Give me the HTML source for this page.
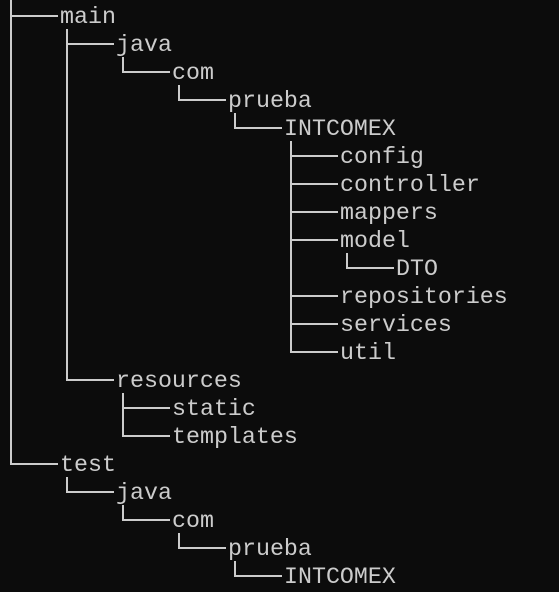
<!DOCTYPE html>
<html><head><style>
html,body{margin:0;padding:0;background:#0c0c0c;width:559px;height:592px;overflow:hidden;position:relative}
.t{position:absolute;font-family:"Liberation Mono",monospace;font-size:23.3px;line-height:28px;color:#cccccc;white-space:pre}
.v,.h{position:absolute;background:#cccccc}
.v{width:2px}.h{height:2px}
</style></head><body>
<div id="c"></div>
<script>
var rows=[[1,'main',0],[2,'java',0],[3,'com',1],[4,'prueba',1],[5,'INTCOMEX',1],[6,'config',0],[6,'controller',0],[6,'mappers',0],[6,'model',0],[7,'DTO',1],[6,'repositories',0],[6,'services',0],[6,'util',1],[2,'resources',1],[3,'static',0],[3,'templates',1],[1,'test',1],[2,'java',1],[3,'com',1],[4,'prueba',1],[5,'INTCOMEX',1]];
var c=document.getElementById('c'),h='';
rows.forEach(function(r,i){
 var tx=4+56*r[0], lx=tx-50, y=28*i;
 h+='<div class="t" style="left:'+tx+'px;top:'+(y+3)+'px">'+r[1]+'</div>';
 h+='<div class="h" style="left:'+lx+'px;top:'+(y+15)+'px;width:'+(tx-lx-2)+'px"></div>';
 h+='<div class="v" style="left:'+lx+'px;top:'+(y+1)+'px;height:'+(r[2]?16:28)+'px"></div>';
});
/* extend verticals for parents spanning children */
function v(x,a,b){h+='<div class="v" style="left:'+x+'px;top:'+a+'px;height:'+(b-a)+'px"></div>';}
v(10,0,465);v(66,29,381);v(290,141,353);
c.innerHTML=h;
</script>
</body></html>
